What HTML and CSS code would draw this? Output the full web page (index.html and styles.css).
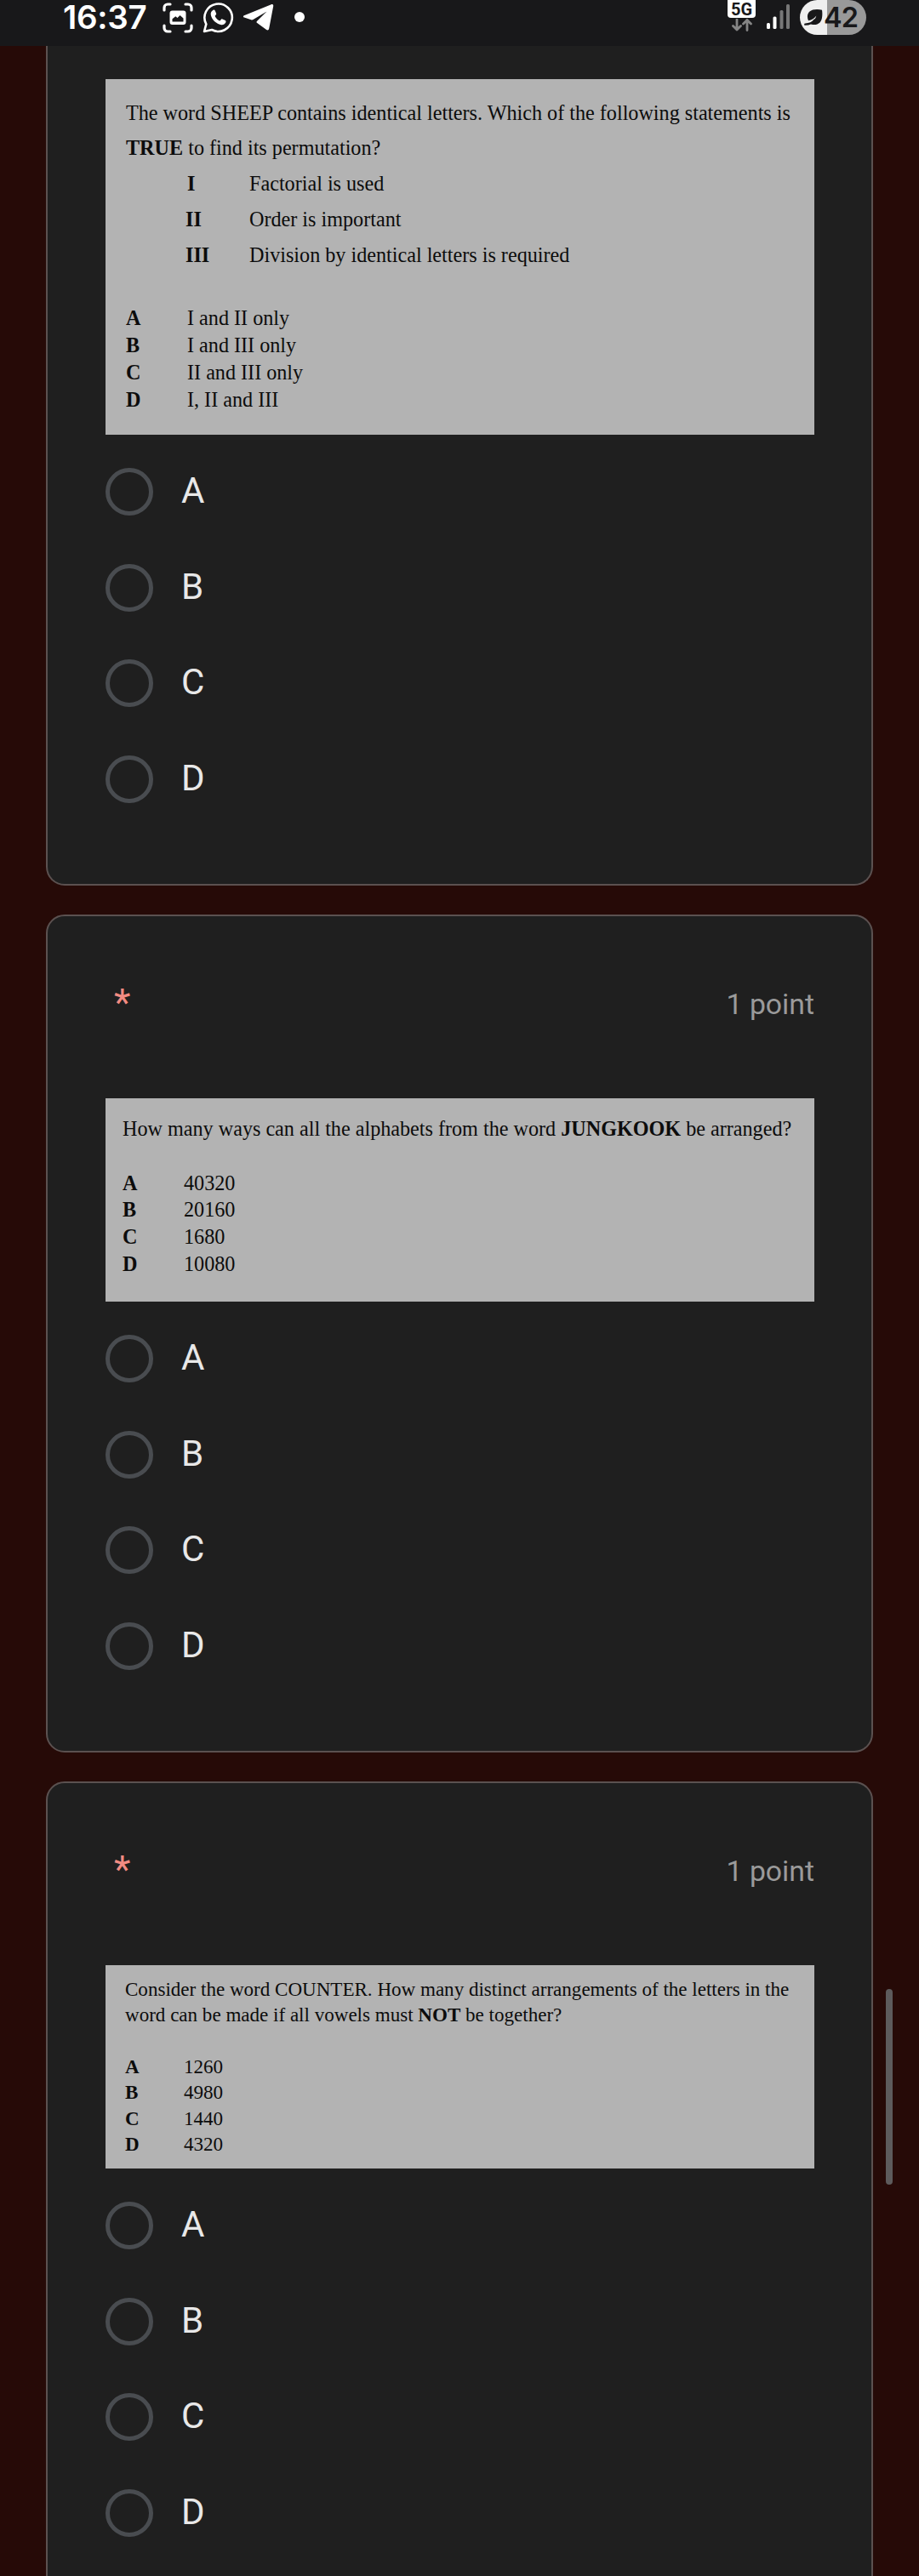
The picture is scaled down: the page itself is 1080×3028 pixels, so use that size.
FILE: index.html
```
<!DOCTYPE html>
<html lang="en">
<head>
<meta charset="utf-8">
<title>Permutation quiz</title>
<link rel="stylesheet" href="styles.css">
</head>
<body>
<header class="status">
  <div class="status-left">
    <span class="clock">16:37</span>
    <svg class="ic-capture" width="36" height="36" viewBox="0 0 36 36" fill="none" stroke="#fff" stroke-width="3.2" stroke-linecap="round">
      <path d="M2 9V6a4 4 0 0 1 4-4h3M27 2h3a4 4 0 0 1 4 4v3M34 27v3a4 4 0 0 1-4 4h-3M9 34H6a4 4 0 0 1-4-4v-3"/>
      <rect x="8.5" y="9.500" width="19" height="16.500" rx="3" fill="#fff" stroke="none"/>
      <path d="M11.500 22.500v-3.300l3.800-3 2.200 1.800 3-3 4 3.500v4z" fill="#18181a" stroke="none"/>
    </svg>
    <svg class="ic-whatsapp" width="37" height="37" viewBox="0 0 37 37">
      <path d="M2 35l2.300-8.700A16.200 16.200 0 1 1 11 33z" fill="none" stroke="#fff" stroke-width="2.600" stroke-linejoin="round"/>
      <path d="M12.600 9.800c.9-.5 1.700-.2 2.100.7l1.400 3.200c.3.800-.1 1.400-1.500 3 .9 2.400 3 4.500 5.900 5.800 1.600-1.900 2-2.400 2.900-2l3.400 1.600c.9.500.8 1.500.4 2.500-.9 1.900-3 2.900-5.200 2.600C16 26.200 10 20.300 9.700 14.500c0-1.900 1-3.700 2.900-4.700z" fill="#fff"/>
    </svg>
    <svg class="ic-telegram" width="37" height="33" viewBox="0 0 37 33">
      <path d="M1.800 14.200 33.800 1.300c1.500-.6 2.700.2 2.400 1.900L31.200 29.500c-.4 2-1.700 2.500-3.400 1.300L17.200 23c-1-.8-1-1.400-.1-2.300L28.500 9.500 12.500 19c-.8.500-1.400.6-2.300.3L2 16.600c-1.400-.5-1.500-1.700-.2-2.400z" fill="#fff"/>
    </svg>
    <span class="dot"></span>
  </div>
  <div class="status-right">
    <div class="network">
      <span class="net-label">5G</span>
      <svg width="24" height="15" viewBox="0 0 24 15" fill="none" stroke="#858585" stroke-width="2.800" stroke-linecap="round" stroke-linejoin="round">
        <path d="M6 1v12M1.500 8.500 6 13l4.500-4.500M18 13.500V1.500M13.500 6 18 1.500 22.500 6"/>
      </svg>
    </div>
    <svg class="signal" width="28" height="29" viewBox="0 0 28 29">
      <rect x="0" y="22" width="4" height="7" rx="1.500" fill="#fff"/>
      <rect x="7.500" y="14.500" width="4" height="14.500" rx="1.500" fill="#fff"/>
      <rect x="15.500" y="7" width="4" height="22" rx="1.500" fill="#777"/>
      <rect x="23" y="0" width="4" height="29" rx="1.500" fill="#777"/>
    </svg>
    <div class="battery">
      <svg width="22" height="20" viewBox="0 0 22 20">
        <path d="M21 .8C15.500-.6 9.500 0 6.500 2.500 3.600 5 3.200 9.500 5 13.200c4-.6 7.300-2.900 9.300-5.700-1.300 4.900-4.600 7.600-7.800 9C10 19 15.500 18.500 18.500 15.500 21.500 12.300 21.800 5.500 21 .8z" fill="#18181a"/>
        <path d="M1.300 17.600C5.500 17.500 10 15.800 12.500 12.500" fill="none" stroke="#18181a" stroke-width="2.400" stroke-linecap="round"/>
      </svg>
      <span>42</span>
    </div>
  </div>
</header>

<main class="form">
  <section class="card card-first">
    <div class="sheet sheet-sheep">
      <p>The word SHEEP contains identical letters. Which of the following statements is<br><b>TRUE</b> to find its permutation?</p>
      <dl class="statements">
        <dt class="single">I</dt><dd>Factorial is used</dd>
        <dt>II</dt><dd>Order is important</dd>
        <dt>III</dt><dd>Division by identical letters is required</dd>
      </dl>
      <dl class="answers">
        <dt>A</dt><dd>I and II only</dd>
        <dt>B</dt><dd>I and III only</dd>
        <dt>C</dt><dd>II and III only</dd>
        <dt>D</dt><dd>I, II and III</dd>
      </dl>
    </div>
    <ul class="options">
      <li><span class="radio"></span><span class="label">A</span></li>
      <li><span class="radio"></span><span class="label">B</span></li>
      <li><span class="radio"></span><span class="label">C</span></li>
      <li><span class="radio"></span><span class="label">D</span></li>
    </ul>
  </section>

  <section class="card">
    <div class="card-head"><span class="required">*</span><span class="points">1 point</span></div>
    <div class="sheet sheet-jungkook">
      <p>How many ways can all the alphabets from the word <b>JUNGKOOK</b> be arranged?</p>
      <dl class="answers">
        <dt>A</dt><dd>40320</dd>
        <dt>B</dt><dd>20160</dd>
        <dt>C</dt><dd>1680</dd>
        <dt>D</dt><dd>10080</dd>
      </dl>
    </div>
    <ul class="options">
      <li><span class="radio"></span><span class="label">A</span></li>
      <li><span class="radio"></span><span class="label">B</span></li>
      <li><span class="radio"></span><span class="label">C</span></li>
      <li><span class="radio"></span><span class="label">D</span></li>
    </ul>
  </section>

  <section class="card">
    <div class="card-head"><span class="required">*</span><span class="points">1 point</span></div>
    <div class="sheet sheet-counter">
      <p>Consider the word COUNTER. How many distinct arrangements of the letters in the<br>word can be made if all vowels must <b>NOT</b> be together?</p>
      <dl class="answers">
        <dt>A</dt><dd>1260</dd>
        <dt>B</dt><dd>4980</dd>
        <dt>C</dt><dd>1440</dd>
        <dt>D</dt><dd>4320</dd>
      </dl>
    </div>
    <ul class="options">
      <li><span class="radio"></span><span class="label">A</span></li>
      <li><span class="radio"></span><span class="label">B</span></li>
      <li><span class="radio"></span><span class="label">C</span></li>
      <li><span class="radio"></span><span class="label">D</span></li>
    </ul>
  </section>
</main>
<div class="scrollbar"></div>
</body>
</html>
```

FILE: styles.css
```
* { box-sizing: border-box; }

body {
  margin: 0;
  position: relative;
  height: 3028px;
  overflow: hidden;
  background: #260a07;
  font-family: Roboto, "Liberation Sans", sans-serif;
}

p, dl, dd, ul { margin: 0; padding: 0; }
ul { list-style: none; }

/* Status bar */
.status {
  height: 54px;
  display: flex;
  justify-content: space-between;
  align-items: flex-start;
  padding: 0 62px 0 74px;
  background: #18181a;
}
.status-left, .status-right { display: flex; height: 41px; align-items: center; }
.clock {
  width: 116px;
  font: 600 38.5px/41px Inter, sans-serif;
  letter-spacing: -0.3px;
  color: #fff;
  white-space: nowrap;
}
.ic-capture { margin-left: 1px; }
.ic-whatsapp { margin-left: 11px; }
.ic-telegram { margin-left: 10px; }
.dot { width: 12px; height: 12px; margin: 0 0 1px 24px; border-radius: 50%; background: #fff; }

.network { display: flex; flex-direction: column; align-items: center; height: 41px; width: 33px; }
.net-label {
  width: 33px;
  height: 21px;
  border-radius: 0 0 4px 4px;
  background: #fff;
  color: #18181a;
  font: 700 20px/22px Roboto, sans-serif;
  text-align: center;
}
.network svg { margin-top: 1px; }
.signal { margin: -2px 0 0 13px; }
.battery {
  display: flex;
  align-items: center;
  width: 78px;
  height: 41px;
  margin-left: 11px;
  padding-left: 5px;
  border-radius: 21px;
  background: linear-gradient(90deg, #efefef 32.5px, #999 32.5px);
}
.battery span {
  margin-left: 1px;
  font: 600 32.5px/41px Inter, sans-serif;
  letter-spacing: -1px;
  color: #18181a;
}

/* Question cards */
.form { display: flex; flex-direction: column; gap: 34px; padding: 0 54px; }
.card {
  height: 985px;
  flex: none;
  padding: 0 67px 0 68px;
  border: 2px solid #5b5150;
  border-radius: 22px;
  background: #1f1f1f;
}
.card-first { height: 987px; padding-top: 39px; border-top: 0; border-radius: 0 0 22px 22px; }
.card-head { display: flex; justify-content: space-between; height: 214px; padding: 76.5px 0 0 10px; }
.required { font-size: 45px; line-height: 50px; color: #f28b82; }
.points { font-size: 33.75px; line-height: 54px; color: #9a9a9a; }

/* Printed question sheets */
.sheet {
  height: 239px;
  background: #b3b3b3;
  color: #0c0c0c;
  font: 24.17px/31.9px "Liberation Serif", "Times New Roman", serif;
  white-space: nowrap;
}
.answers, .statements { display: grid; }
.answers { grid-template-columns: 72px auto; }
dt { font-weight: 700; }

.sheet-sheep { height: 418px; padding: 18.5px 0 0 24px; }
.sheet-sheep p, .statements { line-height: 41.85px; }
.statements { grid-template-columns: 75px auto; padding-left: 70px; }
.statements .single { padding-left: 2px; }
.sheet-sheep .answers { margin-top: 37.5px; }

.sheet-jungkook { padding: 20px 0 0 20px; }
.sheet-jungkook .answers { margin-top: 31.6px; }

.sheet-counter { padding: 13px 0 0 23px; font-size: 23.05px; line-height: 30.3px; }
.sheet-counter .answers { grid-template-columns: 69px auto; margin-top: 30.6px; }

/* Answer choices */
.options { display: flex; flex-direction: column; gap: 56.5px; margin-top: 39px; }
.options li { display: flex; gap: 33px; height: 56px; }
.radio { width: 56px; height: 56px; border: 5px solid #494c50; border-radius: 50%; }
.label { font-size: 42px; line-height: 53px; color: #e8e8e8; }

/* Page scroll indicator, floating over the margin */
.scrollbar {
  position: absolute;
  top: 2338px;
  right: 31px;
  width: 8px;
  height: 230px;
  border-radius: 4px;
  background: #5d5b5c;
}
```
